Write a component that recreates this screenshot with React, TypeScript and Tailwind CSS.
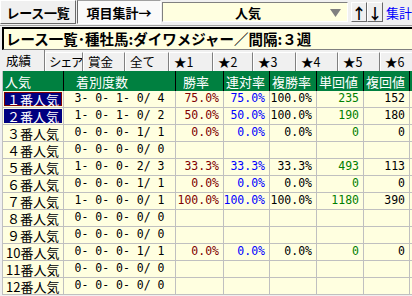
import React from "react";

type Row = {
  label: string;
  rec: string;
  win?: string;
  ren?: string;
  fuku?: string;
  tan?: string;
  fk?: string;
};

const rows: Row[] = [
  { label: "１番人気", rec: "3- 0- 1- 0/ 4", win: "75.0%", ren: "75.0%", fuku: "100.0%", tan: "235", fk: "152" },
  { label: "２番人気", rec: "1- 0- 1- 0/ 2", win: "50.0%", ren: "50.0%", fuku: "100.0%", tan: "190", fk: "180" },
  { label: "３番人気", rec: "0- 0- 0- 1/ 1", win: "0.0%", ren: "0.0%", fuku: "0.0%", tan: "0", fk: "0" },
  { label: "４番人気", rec: "0- 0- 0- 0/ 0" },
  { label: "５番人気", rec: "1- 0- 0- 2/ 3", win: "33.3%", ren: "33.3%", fuku: "33.3%", tan: "493", fk: "113" },
  { label: "６番人気", rec: "0- 0- 0- 1/ 1", win: "0.0%", ren: "0.0%", fuku: "0.0%", tan: "0", fk: "0" },
  { label: "７番人気", rec: "1- 0- 0- 0/ 1", win: "100.0%", ren: "100.0%", fuku: "100.0%", tan: "1180", fk: "390" },
  { label: "８番人気", rec: "0- 0- 0- 0/ 0" },
  { label: "９番人気", rec: "0- 0- 0- 0/ 0" },
  { label: "10番人気", rec: "0- 0- 0- 1/ 1", win: "0.0%", ren: "0.0%", fuku: "0.0%", tan: "0", fk: "0" },
  { label: "11番人気", rec: "0- 0- 0- 0/ 0" },
  { label: "12番人気", rec: "0- 0- 0- 0/ 0" },
];

const tabs = [
  { t: "成績", w: "w-[43px]", sel: true, x: "" },
  { t: "シェア", w: "w-[38px]", x: "tracking-[-1.5px] !pl-[3px]" },
  { t: "賞金", w: "w-[42px]", x: "" },
  { t: "全て", w: "w-[44px]", x: "" },
  { t: "★1", w: "w-[44px]", x: "" },
  { t: "★2", w: "w-[40px]", x: "" },
  { t: "★3", w: "w-[43px]", x: "" },
  { t: "★4", w: "w-[42px]", x: "" },
  { t: "★5", w: "w-[42px]", x: "" },
  { t: "★6", w: "w-[40px]", x: "" },
];

const grid = "grid grid-cols-[61px_112px_48px_46px_47px_47px_46px_1fr]";
const mono = "font-['DejaVu_Sans_Mono',monospace] text-[11.5px] whitespace-pre";

function NumCell({ v, color }: { v?: string; color: string }) {
  return (
    <div className={`border-r border-b border-[#c0c0c0] flex items-center justify-end pr-[4px] ${mono} ${color}`}>
      {v ?? ""}
    </div>
  );
}

const raised = "bg-[#f0f0f0] border border-t-white border-l-white border-r-[#696969] border-b-[#696969]";

export default function App() {
  return (
    <div className="w-[412px] h-[296px] overflow-hidden bg-[#f0f0f0] font-['Noto_Sans_CJK_JP',sans-serif] text-black leading-none">
      {/* top bar */}
      <div className="flex h-[26px] items-start border-b border-[#a0a0a0]">
        <div className={`h-[24px] w-[76px] shrink-0 flex items-center justify-center whitespace-nowrap text-[13px] font-bold tracking-[-0.3px] ${raised}`}>
          レース一覧
        </div>
        <div className="h-[24px] w-[84px] shrink-0 ml-px flex items-center justify-center whitespace-nowrap bg-[#fafafa] border border-t-[#a0a0a0] border-l-[#696969] border-r-white border-b-white text-[13px] font-bold">
          項目集計→
        </div>
        <div className="mt-[2px] ml-px h-[20px] w-[186px] shrink-0 relative flex items-center justify-center bg-[#ffffe0] border border-t-[#808080] border-l-[#808080] border-r-white border-b-white text-[13px] font-bold">
          <span className="pr-[14px]">人気</span>
          <svg className="absolute right-[6px] top-[6px]" width="11" height="8" viewBox="0 0 11 8">
            <polygon points="0,0 11,0 5.5,8" fill="#808080" />
          </svg>
        </div>
        <div className={`mt-[2px] ml-[3px] h-[20px] w-[16px] shrink-0 flex items-center justify-center text-[15px] font-bold ${raised}`}>
          ↑
        </div>
        <div className={`mt-[2px] h-[20px] w-[16px] shrink-0 flex items-center justify-center text-[15px] font-bold ${raised}`}>
          ↓
        </div>
        <div className="mt-[6px] ml-[3px] text-[13px] whitespace-nowrap text-[#0000ff]">集計</div>
      </div>

      {/* title */}
      <div className="ml-[2px] mt-px h-[23px] flex items-center bg-[#ffffe0] border-t-2 border-l-2 border-t-black border-l-black border-b border-b-[#808080] pl-[2px] text-[14.5px] font-bold whitespace-nowrap">
        レース一覧･種牡馬:ダイワメジャー／間隔:３週
      </div>

      {/* tabs */}
      <div className="flex h-[21px] ml-[2px]">
        {tabs.map((tb) => (
          <div
            key={tb.t}
            className={`${tb.w} shrink-0 flex items-center pl-[4px] text-[12.5px] whitespace-nowrap overflow-hidden ${
              tb.sel
                ? "border-r border-r-[#808080] pt-px"
                : "border-l border-l-white border-t border-t-white border-r border-r-[#808080] mt-[2px]"
            } ${tb.x}`}
          >
            {tb.t}
          </div>
        ))}
      </div>

      {/* table */}
      <div className="ml-[2px] border-l border-[#c0c0c0]">
        <div className={`${grid} h-[20px] bg-[#008040] text-white text-[13px] whitespace-nowrap`}>
          <div className="border-r border-black flex items-center pl-[2px]">人気</div>
          <div className="border-r border-black flex items-center pl-[12px]">着別度数</div>
          <div className="border-r border-black flex items-center pl-[7px]">勝率</div>
          <div className="border-r border-black flex items-center pl-[2px]">連対率</div>
          <div className="border-r border-black flex items-center pl-[2px]">複勝率</div>
          <div className="border-r border-black flex items-center pl-[2px]">単回値</div>
          <div className="border-r border-black flex items-center pl-[2px]">複回値</div>
          <div />
        </div>
        {rows.map((r, i) => (
          <div key={r.label} className={`${grid} h-[17px] bg-[#ffffe0]`}>
            <div className="border-r border-b border-[#c0c0c0] p-px flex overflow-hidden">
              <div
                className={`flex-1 flex items-center text-[13px] whitespace-nowrap ${
                  i === 0
                    ? "bg-[#000080] text-white border border-[#800000] pl-[2px]"
                    : i === 1
                    ? "bg-[#000080] text-white pl-[3px]"
                    : i >= 9
                    ? "pl-[2px]"
                    : "pl-[3px]"
                }`}
              >
                {r.label}
              </div>
            </div>
            <div className={`border-r border-b border-[#c0c0c0] flex items-center justify-center ${mono}`}>
              {r.rec}
            </div>
            <NumCell v={r.win} color="text-[#800000]" />
            <NumCell v={r.ren} color="text-[#0000ff]" />
            <NumCell v={r.fuku} color="text-black" />
            <NumCell v={r.tan} color="text-[#008000]" />
            <NumCell v={r.fk} color="text-black" />
            <div className="border-b border-[#c0c0c0]" />
          </div>
        ))}
      </div>
    </div>
  );
}
